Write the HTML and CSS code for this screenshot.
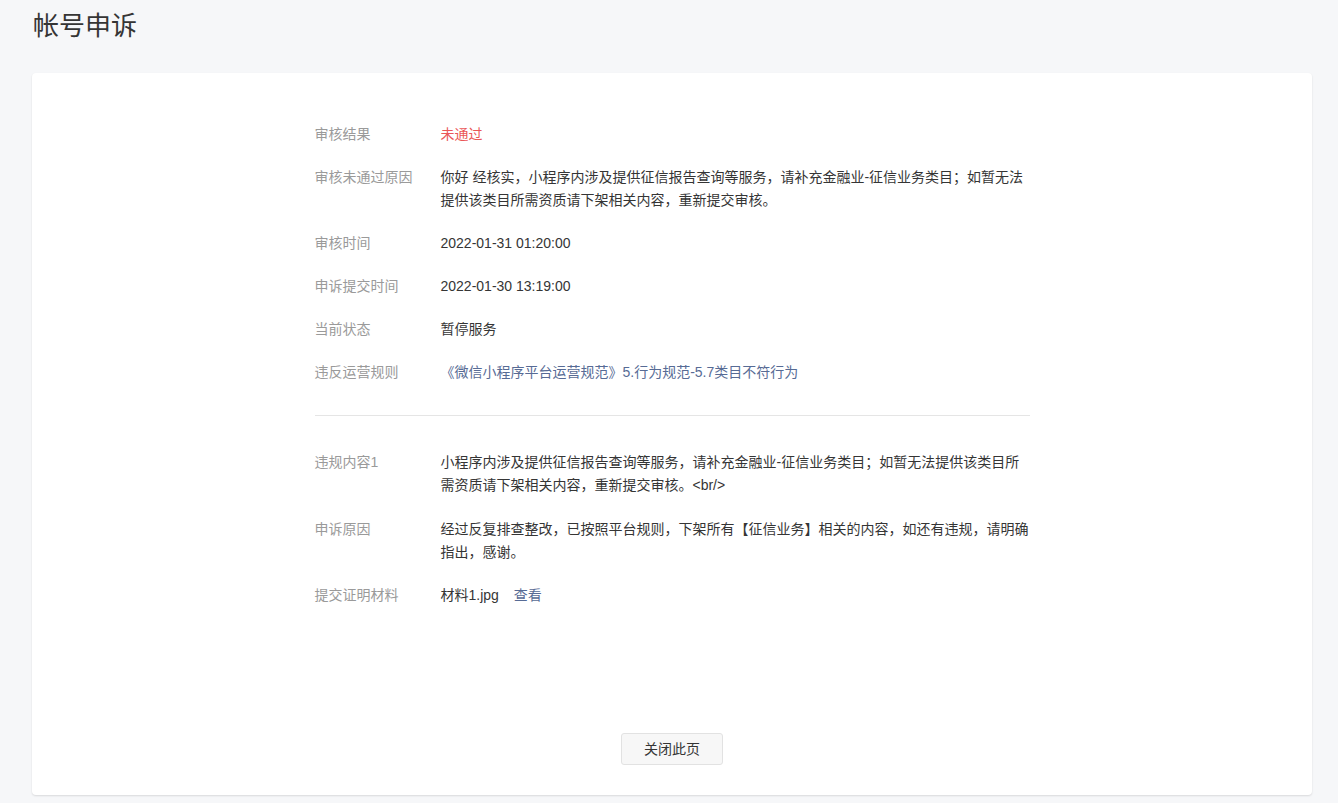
FILE: index.html
```html
<!DOCTYPE html>
<html lang="zh-CN">
<head>
    <meta charset="UTF-8">
    <title>帐号申诉</title>
    <link rel="stylesheet" href="styles.css">
</head>
<body>
    <div class="page">
        <h1 class="page-title">帐号申诉</h1>

        <div class="card">
            <div class="detail">
                <!-- 审核信息 -->
                <dl class="info-list">
                    <div class="info-row">
                        <dt>审核结果</dt>
                        <dd class="text-fail">未通过</dd>
                    </div>
                    <div class="info-row">
                        <dt>审核未通过原因</dt>
                        <dd>你好 经核实，小程序内涉及提供征信报告查询等服务，请补充金融业-征信业务类目；如暂无法提供该类目所需资质请下架相关内容，重新提交审核。</dd>
                    </div>
                    <div class="info-row">
                        <dt>审核时间</dt>
                        <dd>2022-01-31 01:20:00</dd>
                    </div>
                    <div class="info-row">
                        <dt>申诉提交时间</dt>
                        <dd>2022-01-30 13:19:00</dd>
                    </div>
                    <div class="info-row">
                        <dt>当前状态</dt>
                        <dd>暂停服务</dd>
                    </div>
                    <div class="info-row">
                        <dt>违反运营规则</dt>
                        <dd><a class="link" href="#rule">《微信小程序平台运营规范》5.行为规范-5.7类目不符行为</a></dd>
                    </div>
                </dl>

                <hr class="divider">

                <!-- 申诉内容 -->
                <dl class="info-list">
                    <div class="info-row">
                        <dt>违规内容1</dt>
                        <dd>小程序内涉及提供征信报告查询等服务，请补充金融业-征信业务类目；如暂无法提供该类目所需资质请下架相关内容，重新提交审核。&lt;br/&gt;</dd>
                    </div>
                    <div class="info-row">
                        <dt>申诉原因</dt>
                        <dd>经过反复排查整改，已按照平台规则，下架所有【征信业务】相关的内容，如还有违规，请明确指出，感谢。</dd>
                    </div>
                    <div class="info-row">
                        <dt>提交证明材料</dt>
                        <dd><span>材料1.jpg</span><a class="link file-link" href="#view">查看</a></dd>
                    </div>
                </dl>
            </div>

            <div class="card-footer">
                <button class="btn" type="button">关闭此页</button>
            </div>
        </div>
    </div>
</body>
</html>
```

FILE: styles.css
```css
/* 帐号申诉 */
* { margin: 0; padding: 0; box-sizing: border-box; }
body {
    font-family: "Liberation Sans", "Noto Sans CJK SC", sans-serif;
    background: #f6f7f9; color: #353535;
    font-size: 14px; line-height: 23px;
}

.page { padding: 0 26px 8px 32px; }
.page-title {
    font-size: 26px; font-weight: 400; line-height: 36px;
    padding: 8px 0 29px 1px; color: #353535;
}

/* Card */
.card {
    background: #fff; border-radius: 4px;
    box-shadow: 0 1px 2px rgba(0,0,0,0.12);
    height: 722px; display: flex; flex-direction: column;
}
.detail { width: 715px; margin: 0 auto; padding-top: 50px; flex: 1; }

/* Info rows */
.info-list { display: flex; flex-direction: column; gap: 20.1px; }
.info-row { display: flex; }
.info-row dt { width: 126px; flex-shrink: 0; color: #9a9a9a; }
.info-row dd { flex: 1; }
.text-fail { color: #ea5757; }
.link { color: #576b95; text-decoration: none; }
.file-link { margin-left: 15px; }

.divider { border: none; border-top: 1px solid #e5e5e5; margin: 31px 0 35px; }

/* Footer */
.card-footer { display: flex; justify-content: center; padding-bottom: 30px; }
.btn {
    width: 102px; height: 32px; border: 1px solid #e2e2e2; border-radius: 3px;
    background: #f7f7f7; color: #353535; font: inherit; cursor: pointer;
}
```
